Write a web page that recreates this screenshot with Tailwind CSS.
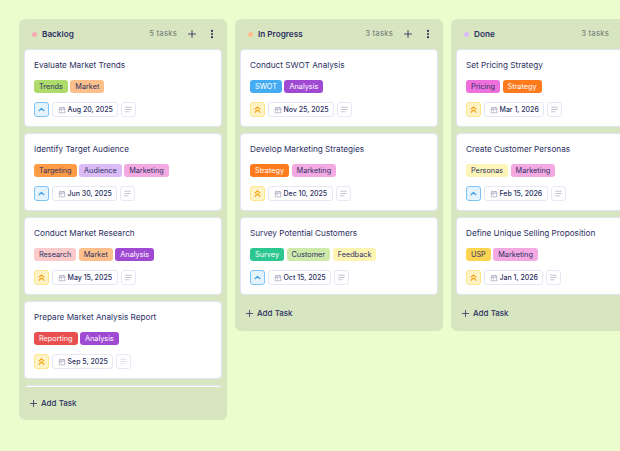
<!DOCTYPE html>
<html lang="en">
<head>
<meta charset="UTF-8">
<title>Marketing Board</title>
<script src="https://cdn.jsdelivr.net/npm/@tailwindcss/browser@4"></script>
</head>
<body class="h-[451px] w-[620px] overflow-hidden bg-[#ebfdcd] font-['Inter',sans-serif] text-[#2b3062]">
<svg class="hidden">
  <symbol id="up" viewBox="0 0 16 16"><path d="M4.500 9.800 8 6.300l3.500 3.500" fill="none" stroke="currentColor" stroke-width="1.600" stroke-linecap="round" stroke-linejoin="round"/></symbol>
  <symbol id="dbl" viewBox="0 0 16 16"><path d="M4.500 7.600 8 4.200l3.500 3.400M4.500 12 8 8.600l3.500 3.400" fill="none" stroke="currentColor" stroke-width="1.600" stroke-linecap="round" stroke-linejoin="round"/></symbol>
  <symbol id="cal" viewBox="0 0 16 16"><path d="M2.500 3.500h11v10h-11zM2.500 6.500h11M5.500 2v2.500M10.500 2v2.500M5 9h3" fill="none" stroke="currentColor" stroke-width="1.200"/></symbol>
  <symbol id="lines" viewBox="0 0 16 16"><path d="M3 4h10M3 8h10M3 12h6" fill="none" stroke="currentColor" stroke-width="1.100" stroke-linecap="round"/></symbol>
  <symbol id="plus" viewBox="0 0 16 16"><path d="M8 2.500v11M2.500 8h11" fill="none" stroke="currentColor" stroke-width="1.400" stroke-linecap="round"/></symbol>
  <symbol id="dots" viewBox="0 0 16 16"><circle cx="8" cy="3" r="1.700" fill="currentColor"/><circle cx="8" cy="8" r="1.700" fill="currentColor"/><circle cx="8" cy="13" r="1.700" fill="currentColor"/></symbol>
</svg>

<div class="flex items-start gap-2 pl-[19px] pt-[19px]">

  <!-- Backlog -->
  <section class="w-[208px] shrink-0 rounded-md bg-[#d7e5c0] pb-[1px]">
    <header class="flex h-[30px] items-center pl-[13px] pr-[10px]">
      <span class="size-[5px] rounded-full bg-[#f9a8b4]"></span>
      <h2 class="ml-[5px] text-[8.200px] font-semibold">Backlog</h2>
      <span class="ml-auto text-[7.800px] tracking-wide text-[#6f7a78]">5 tasks</span>
      <svg class="ml-[10px] size-[10px]"><use href="#plus"/></svg>
      <svg class="ml-[10px] size-[10px]"><use href="#dots"/></svg>
    </header>
    <div class="mx-[5px] flex h-[338px] flex-col gap-[6px] overflow-hidden">
      <article class="h-[78px] shrink-0 rounded-[4px] border border-[#dfe3f3] bg-white pl-[9px] pt-[9px]">
        <h3 class="text-[8.200px] leading-[12px]">Evaluate Market Trends</h3>
        <div class="mt-[9px] flex gap-[2.500px] text-[7.300px] leading-[13px]">
          <span class="rounded-[3px] bg-[#aedb6c] px-[5px]">Trends</span>
          <span class="rounded-[3px] bg-[#fdc08c] px-[5px]">Market</span>
        </div>
        <div class="mt-[9px] flex items-center gap-[3px]">
          <span class="flex h-[15px] w-[15px] items-center justify-center rounded-[3px] border border-[#7cc4f8] bg-[#e4f3fe] text-[#3d9be0]"><svg class="size-[11px]"><use href="#up"/></svg></span>
          <span class="flex h-[15px] items-center gap-[2px] rounded-[3px] border border-[#e6e8f5] px-[4.500px] text-[7px] leading-[13px] font-medium"><svg class="size-[8px] text-[#8d92ad]"><use href="#cal"/></svg>Aug 20, 2025</span>
          <span class="flex h-[15px] w-[15px] items-center justify-center rounded-[3px] border border-[#e6e8f5] text-[#9da1b8]"><svg class="size-[9px]"><use href="#lines"/></svg></span>
        </div>
      </article>
      <article class="h-[78px] shrink-0 rounded-[4px] border border-[#dfe3f3] bg-white pl-[9px] pt-[9px]">
        <h3 class="text-[8.200px] leading-[12px]">Identify Target Audience</h3>
        <div class="mt-[9px] flex gap-[2.500px] text-[7.300px] leading-[13px]">
          <span class="rounded-[3px] bg-[#ff9b45] px-[5px]">Targeting</span>
          <span class="rounded-[3px] bg-[#dcbcf6] px-[5px]">Audience</span>
          <span class="rounded-[3px] bg-[#f5a9e2] px-[5px]">Marketing</span>
        </div>
        <div class="mt-[9px] flex items-center gap-[3px]">
          <span class="flex h-[15px] w-[15px] items-center justify-center rounded-[3px] border border-[#7cc4f8] bg-[#e4f3fe] text-[#3d9be0]"><svg class="size-[11px]"><use href="#up"/></svg></span>
          <span class="flex h-[15px] items-center gap-[2px] rounded-[3px] border border-[#e6e8f5] px-[4.500px] text-[7px] leading-[13px] font-medium"><svg class="size-[8px] text-[#8d92ad]"><use href="#cal"/></svg>Jun 30, 2025</span>
          <span class="flex h-[15px] w-[15px] items-center justify-center rounded-[3px] border border-[#e6e8f5] text-[#9da1b8]"><svg class="size-[9px]"><use href="#lines"/></svg></span>
        </div>
      </article>
      <article class="h-[78px] shrink-0 rounded-[4px] border border-[#dfe3f3] bg-white pl-[9px] pt-[9px]">
        <h3 class="text-[8.200px] leading-[12px]">Conduct Market Research</h3>
        <div class="mt-[9px] flex gap-[2.500px] text-[7.300px] leading-[13px]">
          <span class="rounded-[3px] bg-[#fbcaca] px-[5px]">Research</span>
          <span class="rounded-[3px] bg-[#fdc08c] px-[5px]">Market</span>
          <span class="rounded-[3px] bg-[#a04ad4] px-[5px] text-white">Analysis</span>
        </div>
        <div class="mt-[9px] flex items-center gap-[3px]">
          <span class="flex h-[15px] w-[15px] items-center justify-center rounded-[3px] border border-[#fde68a] bg-[#fef3c7] text-[#f59e0b]"><svg class="size-[11px]"><use href="#dbl"/></svg></span>
          <span class="flex h-[15px] items-center gap-[2px] rounded-[3px] border border-[#e6e8f5] px-[4.500px] text-[7px] leading-[13px] font-medium"><svg class="size-[8px] text-[#8d92ad]"><use href="#cal"/></svg>May 15, 2025</span>
          <span class="flex h-[15px] w-[15px] items-center justify-center rounded-[3px] border border-[#e6e8f5] text-[#9da1b8]"><svg class="size-[9px]"><use href="#lines"/></svg></span>
        </div>
      </article>
      <article class="h-[78px] shrink-0 rounded-[4px] border border-[#dfe3f3] bg-white pl-[9px] pt-[9px]">
        <h3 class="text-[8.200px] leading-[12px]">Prepare Market Analysis Report</h3>
        <div class="mt-[9px] flex gap-[2.500px] text-[7.300px] leading-[13px]">
          <span class="rounded-[3px] bg-[#e8504f] px-[5px] text-white">Reporting</span>
          <span class="rounded-[3px] bg-[#a04ad4] px-[5px] text-white">Analysis</span>
        </div>
        <div class="mt-[9px] flex items-center gap-[3px]">
          <span class="flex h-[15px] w-[15px] items-center justify-center rounded-[3px] border border-[#fde68a] bg-[#fef3c7] text-[#f59e0b]"><svg class="size-[11px]"><use href="#dbl"/></svg></span>
          <span class="flex h-[15px] items-center gap-[2px] rounded-[3px] border border-[#e6e8f5] px-[4.500px] text-[7px] leading-[13px] font-medium"><svg class="size-[8px] text-[#8d92ad]"><use href="#cal"/></svg>Sep 5, 2025</span>
          <span class="flex h-[15px] w-[15px] items-center justify-center rounded-[3px] border border-[#e6e8f5] text-[#c9cce0]"><svg class="size-[9px]"><use href="#lines"/></svg></span>
        </div>
      </article>
      <article class="h-[78px] shrink-0 rounded-[4px] border border-[#dfe3f3] bg-white"></article>
    </div>
    <button class="flex h-[32px] items-center gap-[3px] pl-[10px] text-[8px] font-medium"><svg class="size-[9px]"><use href="#plus"/></svg>Add Task</button>
  </section>

  <!-- In Progress -->
  <section class="w-[208px] shrink-0 rounded-md bg-[#d7e5c0] pb-[1px]">
    <header class="flex h-[30px] items-center pl-[13px] pr-[10px]">
      <span class="size-[5px] rounded-full bg-[#fdc08c]"></span>
      <h2 class="ml-[5px] text-[8.200px] font-semibold">In Progress</h2>
      <span class="ml-auto text-[7.800px] tracking-wide text-[#6f7a78]">3 tasks</span>
      <svg class="ml-[10px] size-[10px]"><use href="#plus"/></svg>
      <svg class="ml-[10px] size-[10px]"><use href="#dots"/></svg>
    </header>
    <div class="mx-[5px] flex flex-col gap-[6px]">
      <article class="h-[78px] rounded-[4px] border border-[#dfe3f3] bg-white pl-[9px] pt-[9px]">
        <h3 class="text-[8.200px] leading-[12px]">Conduct SWOT Analysis</h3>
        <div class="mt-[9px] flex gap-[2.500px] text-[7.300px] leading-[13px]">
          <span class="rounded-[3px] bg-[#45abf3] px-[5px] text-white">SWOT</span>
          <span class="rounded-[3px] bg-[#a04ad4] px-[5px] text-white">Analysis</span>
        </div>
        <div class="mt-[9px] flex items-center gap-[3px]">
          <span class="flex h-[15px] w-[15px] items-center justify-center rounded-[3px] border border-[#fde68a] bg-[#fef3c7] text-[#f59e0b]"><svg class="size-[11px]"><use href="#dbl"/></svg></span>
          <span class="flex h-[15px] items-center gap-[2px] rounded-[3px] border border-[#e6e8f5] px-[4.500px] text-[7px] leading-[13px] font-medium"><svg class="size-[8px] text-[#8d92ad]"><use href="#cal"/></svg>Nov 25, 2025</span>
          <span class="flex h-[15px] w-[15px] items-center justify-center rounded-[3px] border border-[#e6e8f5] text-[#9da1b8]"><svg class="size-[9px]"><use href="#lines"/></svg></span>
        </div>
      </article>
      <article class="h-[78px] rounded-[4px] border border-[#dfe3f3] bg-white pl-[9px] pt-[9px]">
        <h3 class="text-[8.200px] leading-[12px]">Develop Marketing Strategies</h3>
        <div class="mt-[9px] flex gap-[2.500px] text-[7.300px] leading-[13px]">
          <span class="rounded-[3px] bg-[#ff7a1c] px-[5px] text-white">Strategy</span>
          <span class="rounded-[3px] bg-[#f5a9e2] px-[5px]">Marketing</span>
        </div>
        <div class="mt-[9px] flex items-center gap-[3px]">
          <span class="flex h-[15px] w-[15px] items-center justify-center rounded-[3px] border border-[#fde68a] bg-[#fef3c7] text-[#f59e0b]"><svg class="size-[11px]"><use href="#dbl"/></svg></span>
          <span class="flex h-[15px] items-center gap-[2px] rounded-[3px] border border-[#e6e8f5] px-[4.500px] text-[7px] leading-[13px] font-medium"><svg class="size-[8px] text-[#8d92ad]"><use href="#cal"/></svg>Dec 10, 2025</span>
          <span class="flex h-[15px] w-[15px] items-center justify-center rounded-[3px] border border-[#e6e8f5] text-[#9da1b8]"><svg class="size-[9px]"><use href="#lines"/></svg></span>
        </div>
      </article>
      <article class="h-[78px] rounded-[4px] border border-[#dfe3f3] bg-white pl-[9px] pt-[9px]">
        <h3 class="text-[8.200px] leading-[12px]">Survey Potential Customers</h3>
        <div class="mt-[9px] flex gap-[2.500px] text-[7.300px] leading-[13px]">
          <span class="rounded-[3px] bg-[#2cc690] px-[5px] text-white">Survey</span>
          <span class="rounded-[3px] bg-[#cfeaa8] px-[5px]">Customer</span>
          <span class="rounded-[3px] bg-[#fdf4b2] px-[5px]">Feedback</span>
        </div>
        <div class="mt-[9px] flex items-center gap-[3px]">
          <span class="flex h-[15px] w-[15px] items-center justify-center rounded-[3px] border border-[#7cc4f8] bg-[#e4f3fe] text-[#3d9be0]"><svg class="size-[11px]"><use href="#up"/></svg></span>
          <span class="flex h-[15px] items-center gap-[2px] rounded-[3px] border border-[#e6e8f5] px-[4.500px] text-[7px] leading-[13px] font-medium"><svg class="size-[8px] text-[#8d92ad]"><use href="#cal"/></svg>Oct 15, 2025</span>
          <span class="flex h-[15px] w-[15px] items-center justify-center rounded-[3px] border border-[#e6e8f5] text-[#9da1b8]"><svg class="size-[9px]"><use href="#lines"/></svg></span>
        </div>
      </article>
    </div>
    <button class="mt-[1px] flex h-[34px] items-center gap-[3px] pl-[10px] text-[8px] font-medium"><svg class="size-[9px]"><use href="#plus"/></svg>Add Task</button>
  </section>

  <!-- Done -->
  <section class="w-[208px] shrink-0 rounded-md bg-[#d7e5c0] pb-[1px]">
    <header class="flex h-[30px] items-center pl-[13px] pr-[10px]">
      <span class="size-[5px] rounded-full bg-[#dcbcf6]"></span>
      <h2 class="ml-[5px] text-[8.200px] font-semibold">Done</h2>
      <span class="ml-auto text-[7.800px] tracking-wide text-[#6f7a78]">3 tasks</span>
      <svg class="ml-[10px] size-[10px]"><use href="#plus"/></svg>
      <svg class="ml-[10px] size-[10px]"><use href="#dots"/></svg>
    </header>
    <div class="mx-[5px] flex flex-col gap-[6px]">
      <article class="h-[78px] rounded-[4px] border border-[#dfe3f3] bg-white pl-[9px] pt-[9px]">
        <h3 class="text-[8.200px] leading-[12px]">Set Pricing Strategy</h3>
        <div class="mt-[9px] flex gap-[2.500px] text-[7.300px] leading-[13px]">
          <span class="rounded-[3px] bg-[#ee70dc] px-[5px]">Pricing</span>
          <span class="rounded-[3px] bg-[#ff7a1c] px-[5px] text-white">Strategy</span>
        </div>
        <div class="mt-[9px] flex items-center gap-[3px]">
          <span class="flex h-[15px] w-[15px] items-center justify-center rounded-[3px] border border-[#fde68a] bg-[#fef3c7] text-[#f59e0b]"><svg class="size-[11px]"><use href="#dbl"/></svg></span>
          <span class="flex h-[15px] items-center gap-[2px] rounded-[3px] border border-[#e6e8f5] px-[4.500px] text-[7px] leading-[13px] font-medium"><svg class="size-[8px] text-[#8d92ad]"><use href="#cal"/></svg>Mar 1, 2026</span>
          <span class="flex h-[15px] w-[15px] items-center justify-center rounded-[3px] border border-[#e6e8f5] text-[#9da1b8]"><svg class="size-[9px]"><use href="#lines"/></svg></span>
        </div>
      </article>
      <article class="h-[78px] rounded-[4px] border border-[#dfe3f3] bg-white pl-[9px] pt-[9px]">
        <h3 class="text-[8.200px] leading-[12px]">Create Customer Personas</h3>
        <div class="mt-[9px] flex gap-[2.500px] text-[7.300px] leading-[13px]">
          <span class="rounded-[3px] bg-[#fdf4b8] px-[5px]">Personas</span>
          <span class="rounded-[3px] bg-[#f5a9e2] px-[5px]">Marketing</span>
        </div>
        <div class="mt-[9px] flex items-center gap-[3px]">
          <span class="flex h-[15px] w-[15px] items-center justify-center rounded-[3px] border border-[#7cc4f8] bg-[#e4f3fe] text-[#3d9be0]"><svg class="size-[11px]"><use href="#up"/></svg></span>
          <span class="flex h-[15px] items-center gap-[2px] rounded-[3px] border border-[#e6e8f5] px-[4.500px] text-[7px] leading-[13px] font-medium"><svg class="size-[8px] text-[#8d92ad]"><use href="#cal"/></svg>Feb 15, 2026</span>
          <span class="flex h-[15px] w-[15px] items-center justify-center rounded-[3px] border border-[#e6e8f5] text-[#9da1b8]"><svg class="size-[9px]"><use href="#lines"/></svg></span>
        </div>
      </article>
      <article class="h-[78px] rounded-[4px] border border-[#dfe3f3] bg-white pl-[9px] pt-[9px]">
        <h3 class="text-[8.200px] leading-[12px]">Define Unique Selling Proposition</h3>
        <div class="mt-[9px] flex gap-[2.500px] text-[7.300px] leading-[13px]">
          <span class="rounded-[3px] bg-[#fcd550] px-[5px]">USP</span>
          <span class="rounded-[3px] bg-[#f5a9e2] px-[5px]">Marketing</span>
        </div>
        <div class="mt-[9px] flex items-center gap-[3px]">
          <span class="flex h-[15px] w-[15px] items-center justify-center rounded-[3px] border border-[#fde68a] bg-[#fef3c7] text-[#f59e0b]"><svg class="size-[11px]"><use href="#dbl"/></svg></span>
          <span class="flex h-[15px] items-center gap-[2px] rounded-[3px] border border-[#e6e8f5] px-[4.500px] text-[7px] leading-[13px] font-medium"><svg class="size-[8px] text-[#8d92ad]"><use href="#cal"/></svg>Jan 1, 2026</span>
          <span class="flex h-[15px] w-[15px] items-center justify-center rounded-[3px] border border-[#e6e8f5] text-[#9da1b8]"><svg class="size-[9px]"><use href="#lines"/></svg></span>
        </div>
      </article>
    </div>
    <button class="mt-[1px] flex h-[34px] items-center gap-[3px] pl-[10px] text-[8px] font-medium"><svg class="size-[9px]"><use href="#plus"/></svg>Add Task</button>
  </section>

</div>
</body>
</html>
